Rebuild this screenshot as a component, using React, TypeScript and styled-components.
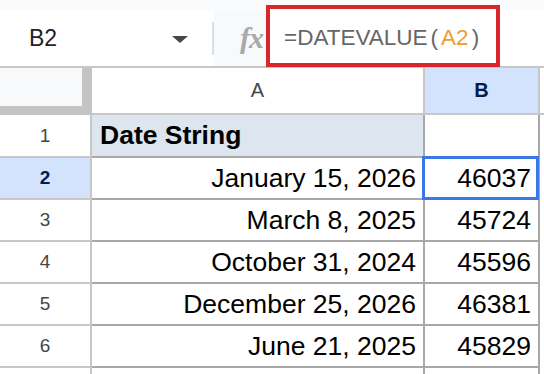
import React from 'react';
import styled, { createGlobalStyle } from 'styled-components';

const GlobalStyle = createGlobalStyle`
  html, body {
    margin: 0;
    padding: 0;
    background: #ffffff;
  }
  body {
    font-family: "Liberation Sans", Arial, sans-serif;
    color: #000;
  }
`;

const Page = styled.div`
  width: 544px;
  height: 374px;
  overflow: hidden;
  background: #fff;
`;

const TopStrip = styled.div`
  height: 10px;
  background: #f9fbfd;
`;

const FormulaBar = styled.div`
  display: flex;
  height: 56px;
  border-bottom: 2px solid #c7c7c7;
`;

const NameBox = styled.div`
  width: 212px;
  display: flex;
  align-items: center;
  justify-content: space-between;
  padding: 0 24px 0 29px;
  box-sizing: border-box;
  font-size: 23px;
  color: #1f1f1f;
`;

const Caret = styled.span`
  width: 0;
  height: 0;
  border-left: 8px solid transparent;
  border-right: 8px solid transparent;
  border-top: 7px solid #444746;
  margin-top: 2px;
`;

const Divider = styled.div`
  width: 2px;
  margin: 12px 0 11px;
  background: #d3e0ef;
`;

const FxCell = styled.div`
  width: 52px;
  display: flex;
  align-items: center;
  justify-content: flex-end;
  padding-right: 3px;
  box-sizing: border-box;
  background: #f8f9fa;
  font-family: "Liberation Serif", "DejaVu Serif", serif;
  font-style: italic;
  font-weight: bold;
  font-size: 30px;
  color: #a9a9a9;
  letter-spacing: -1px;
`;

const FormulaInput = styled.div`
  position: relative;
  flex: 1;
  display: flex;
  align-items: center;
  padding-left: 18px;
  font-family: "Liberation Sans", Arial, sans-serif;
  font-size: 22.5px;
  color: #666666;
`;

const Paren = styled.span`
  margin: 0 3px;
`;

const Ref = styled.span`
  color: #f29b33;
`;

const Highlight = styled.div`
  position: absolute;
  left: 0;
  top: -5px;
  width: 234px;
  height: 62px;
  box-sizing: border-box;
  border: 4px solid #d9262a;
  pointer-events: none;
`;

const Grid = styled.div`
  display: grid;
  grid-template-columns: 92px 333px 115px 1fr;
  grid-auto-rows: 42px;
  grid-template-rows: 47px 43px;
`;

const Corner = styled.div`
  background: #c4c4c4;
`;

const CornerInner = styled.div`
  width: 82px;
  height: 38px;
  background: #f8f9fa;
`;

const ColHeader = styled.div<{ $active?: boolean }>`
  display: flex;
  align-items: center;
  justify-content: center;
  box-sizing: border-box;
  border-right: 2px solid #c7c7c7;
  border-bottom: 2px solid #c7c7c7;
  background: ${(p) => (p.$active ? '#d3e3fd' : '#ffffff')};
  color: ${(p) => (p.$active ? '#041e49' : '#444746')};
  font-weight: ${(p) => (p.$active ? 'bold' : 'normal')};
  font-size: 20px;
`;

const Blank = styled.div`
  box-sizing: border-box;
  border-bottom: 2px solid #c7c7c7;
`;

const RowHeader = styled.div<{ $active?: boolean }>`
  display: flex;
  align-items: center;
  justify-content: center;
  box-sizing: border-box;
  border-right: 2px solid #c7c7c7;
  border-bottom: 2px solid #c7c7c7;
  background: ${(p) => (p.$active ? '#d3e3fd' : '#ffffff')};
  color: ${(p) => (p.$active ? '#041e49' : '#444746')};
  font-weight: ${(p) => (p.$active ? 'bold' : 'normal')};
  font-size: 19px;
`;

const Cell = styled.div<{ $header?: boolean; $selected?: boolean }>`
  position: relative;
  display: flex;
  align-items: center;
  justify-content: ${(p) => (p.$header ? 'flex-start' : 'flex-end')};
  box-sizing: border-box;
  padding: 0 7px 0 8px;
  border-right: 2px solid #a8a8a8;
  border-bottom: 2px solid #a8a8a8;
  background: ${(p) => (p.$header ? '#dde5ef' : '#ffffff')};
  font-size: 26.5px;
  font-weight: ${(p) => (p.$header ? 'bold' : 'normal')};
  white-space: nowrap;

  ${(p) =>
    p.$selected &&
    `
    &::after {
      content: '';
      position: absolute;
      left: -3px;
      top: -2px;
      right: -1px;
      bottom: -2px;
      border: 3px solid #3b78e7;
    }
  `}
`;

const Empty = styled.div``;

const rows = [
  { date: 'January 15, 2026', serial: '46037' },
  { date: 'March 8, 2025', serial: '45724' },
  { date: 'October 31, 2024', serial: '45596' },
  { date: 'December 25, 2026', serial: '46381' },
  { date: 'June 21, 2025', serial: '45829' },
];

export default function App() {
  return (
    <Page>
      <GlobalStyle />
      <TopStrip />
      <FormulaBar>
        <NameBox>
          B2
          <Caret />
        </NameBox>
        <Divider />
        <FxCell>fx</FxCell>
        <FormulaInput>
          =DATEVALUE<Paren>(</Paren>
          <Ref>A2</Ref>
          <Paren>)</Paren>
          <Highlight />
        </FormulaInput>
      </FormulaBar>
      <Grid>
        <Corner>
          <CornerInner />
        </Corner>
        <ColHeader>A</ColHeader>
        <ColHeader $active>B</ColHeader>
        <Blank />

        <RowHeader>1</RowHeader>
        <Cell $header>Date String</Cell>
        <Cell />
        <Empty />

        {rows.map((r, i) => (
          <React.Fragment key={r.serial}>
            <RowHeader $active={i === 0}>{i + 2}</RowHeader>
            <Cell>{r.date}</Cell>
            <Cell $selected={i === 0}>{r.serial}</Cell>
            <Empty />
          </React.Fragment>
        ))}

        <RowHeader />
        <Cell />
        <Cell />
        <Empty />
      </Grid>
    </Page>
  );
}
